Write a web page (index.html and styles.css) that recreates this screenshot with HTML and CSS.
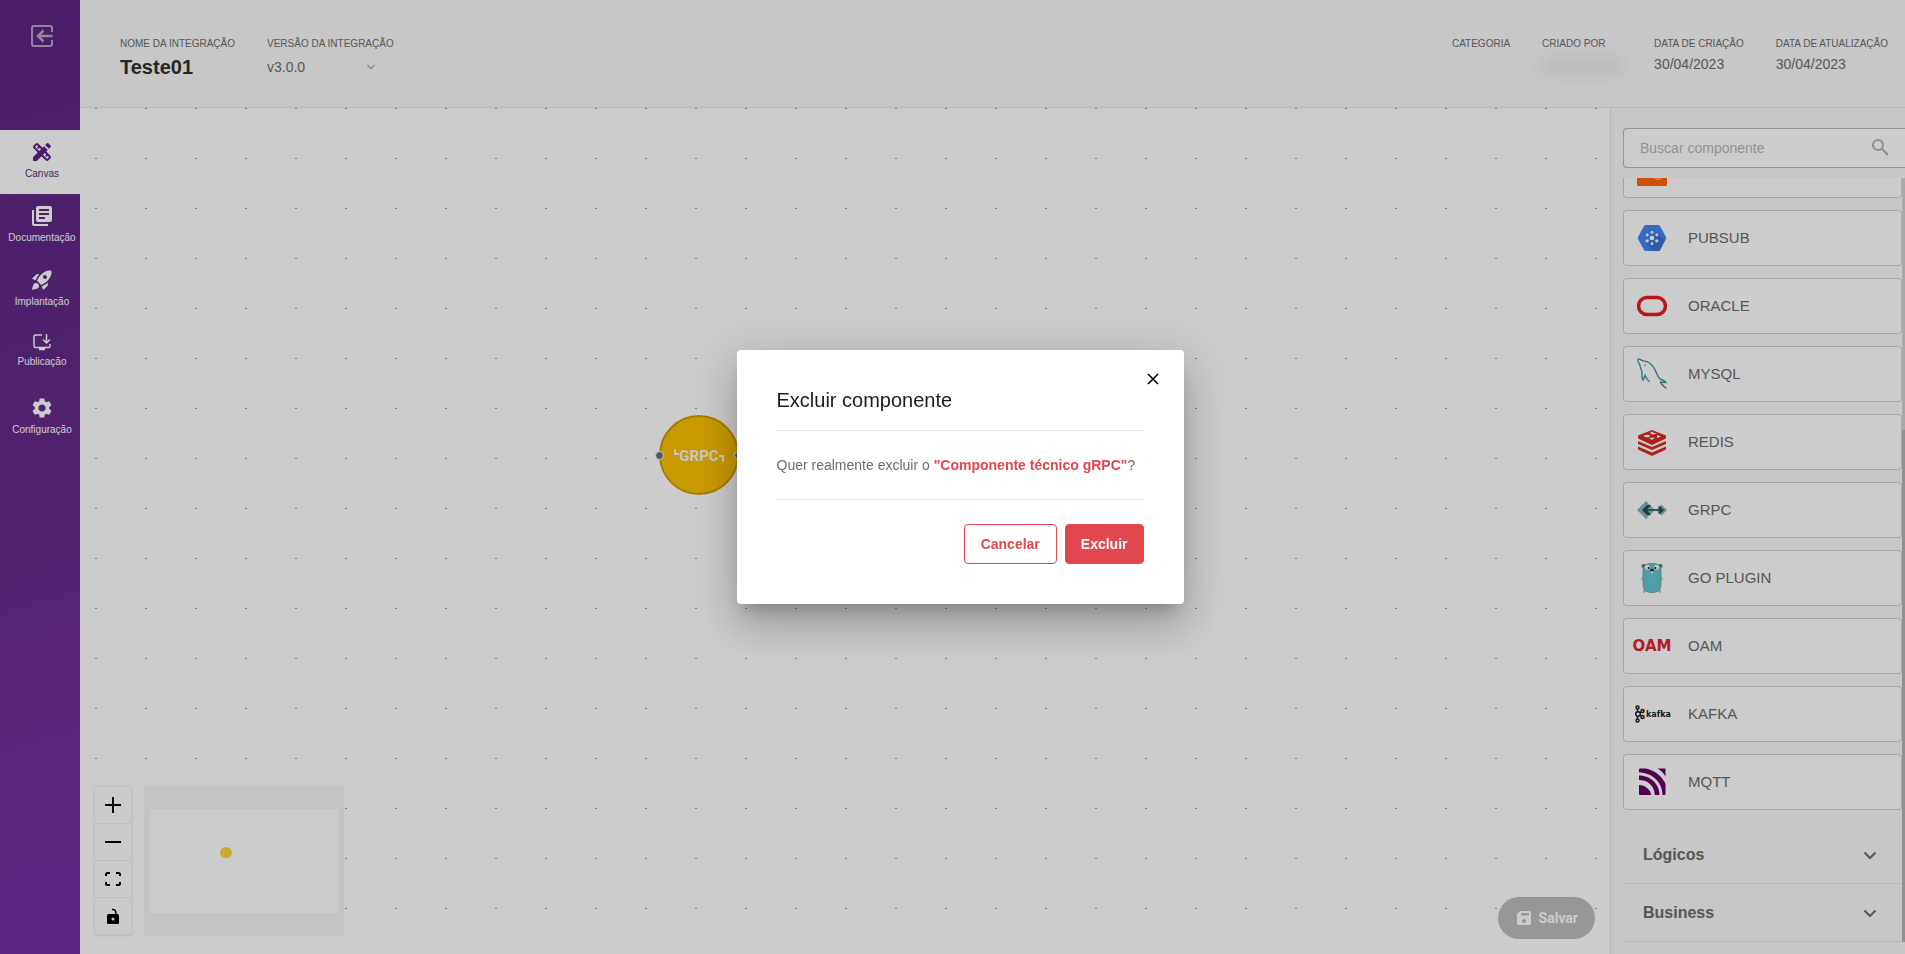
FILE: index.html
```html
<!DOCTYPE html>
<html lang="pt-BR">
<head>
    <meta charset="UTF-8">
    <meta name="viewport" content="width=device-width, initial-scale=1.0">
    <title>Teste01 - Canvas</title>
    <link rel="stylesheet" href="styles.css">
</head>
<body>
    <div class="app">
        <nav class="sidebar">
            <a href="#" class="exit" aria-label="Sair">
                <svg width="24" height="24" viewBox="0 0 24 24" fill="none" stroke="currentColor" stroke-width="2"><path d="M22 8V4a2 2 0 0 0-2-2H4a2 2 0 0 0-2 2v16a2 2 0 0 0 2 2h16a2 2 0 0 0 2-2v-4"/><path d="M22.500 12H9M13.500 6.500L8 12l5.500 5.500" stroke-width="2.500"/></svg>
            </a>
            <a href="#" class="nav-item active">
                <svg width="24" height="24" viewBox="0 0 24 24" fill="currentColor"><path d="M16.24 11.51l1.57-1.57-3.75-3.75-1.57 1.57-4.14-4.13c-.78-.78-2.05-.78-2.83 0l-1.9 1.9c-.78.78-.78 2.05 0 2.83l4.13 4.13L3 17.25V21h3.75l4.76-4.76 4.13 4.13c.95.95 2.23.6 2.83 0l1.9-1.9c.78-.78.78-2.05 0-2.83l-4.13-4.13zm-7.06-.44L5.04 6.94l1.89-1.9L8.2 6.31 7.02 7.5l1.41 1.41 1.19-1.19 1.45 1.45-1.89 1.9zm7.88 7.89l-4.13-4.13 1.9-1.9 1.45 1.45-1.19 1.19 1.41 1.41 1.19-1.19 1.27 1.27-1.9 1.9zM20.71 7.04c.39-.39.39-1.02 0-1.41l-2.34-2.34c-.47-.47-1.12-.29-1.41 0l-1.83 1.83 3.75 3.75 1.83-1.83z"/></svg>
                <span>Canvas</span>
            </a>
            <a href="#" class="nav-item">
                <svg width="24" height="24" viewBox="0 0 24 24" fill="currentColor"><path d="M4 6H2v14c0 1.1.9 2 2 2h14v-2H4V6zm16-4H8c-1.1 0-2 .9-2 2v12c0 1.1.9 2 2 2h12c1.1 0 2-.9 2-2V4c0-1.100-.9-2-2-2zm-1 9H9V9h10v2zm-4 4H9v-2h6v2zm4-8H9V5h10v2z"/></svg>
                <span>Documentação</span>
            </a>
            <a href="#" class="nav-item">
                <svg width="24" height="24" viewBox="0 0 24 24" fill="currentColor"><path d="M9.19 6.35c-2.04 2.29-3.44 5.58-3.57 5.89L2 10.690l4.050-4.050c.47-.47 1.150-.68 1.810-.55l1.330.26zM11.170 17s3.740-1.550 5.890-3.700c5.400-5.400 4.500-9.620 4.210-10.570-.95-.3-5.170-1.190-10.570 4.210C8.550 9.090 7 12.830 7 12.830L11.170 17zm6.480-2.190c-2.290 2.040-5.580 3.440-5.890 3.570L13.310 22l4.050-4.050c.47-.47.68-1.150.55-1.810l-.26-1.330zM9 18c0 .83-.34 1.580-.88 2.120C6.940 21.300 2 22 2 22s.7-4.940 1.880-6.120A2.996 2.996 0 0 1 9 18zm4-9c0-1.100.9-2 2-2s2 .9 2 2-.9 2-2 2-2-.9-2-2z"/></svg>
                <span>Implantação</span>
            </a>
            <a href="#" class="nav-item small-icon">
                <svg width="22" height="22" viewBox="0 0 22 22" fill="none" stroke="currentColor" stroke-width="1.500"><path d="M11 3H4.500Q3 3 3 4.500V14q0 1.500 1.500 1.500h13q1.500 0 1.500-1.500v-2M15.500 2v8.500M12 7.500l3.500 3.500L19 7.500"/><path d="M8 17h6" stroke-width="2.500"/></svg>
                <span>Publicação</span>
            </a>
            <a href="#" class="nav-item">
                <svg width="24" height="24" viewBox="0 0 24 24" fill="currentColor"><path d="M19.140 12.940c.04-.3.06-.61.06-.94 0-.32-.02-.64-.07-.94l2.030-1.580c.18-.14.23-.41.12-.61l-1.920-3.320c-.12-.22-.37-.29-.59-.22l-2.390.96c-.5-.38-1.030-.7-1.620-.94l-.36-2.540c-.04-.24-.24-.41-.48-.41h-3.840c-.24 0-.43.17-.47.41l-.36 2.540c-.59.24-1.130.57-1.620.94l-2.390-.96c-.22-.08-.47 0-.59.22L2.740 8.870c-.12.21-.08.47.12.61l2.030 1.580c-.05.3-.09.63-.09.94s.02.64.07.94l-2.030 1.580c-.18.14-.23.41-.12.61l1.920 3.320c.12.22.37.29.59.22l2.390-.96c.5.38 1.030.7 1.620.94l.36 2.540c.05.24.24.41.48.41h3.840c.24 0 .44-.17.47-.41l.36-2.540c.59-.24 1.130-.56 1.620-.94l2.390.96c.22.08.47 0 .59-.22l1.920-3.320c.12-.22.07-.47-.12-.61l-2.010-1.580zM12 15.600c-1.980 0-3.600-1.620-3.600-3.600s1.620-3.600 3.600-3.600 3.600 1.620 3.600 3.600-1.620 3.600-3.600 3.600z"/></svg>
                <span>Configuração</span>
            </a>
        </nav>

        <div class="main">
            <header class="header">
                <div class="field">
                    <span class="label">NOME DA INTEGRAÇÃO</span>
                    <h1>Teste01</h1>
                </div>
                <div class="field">
                    <label class="label" for="version">VERSÃO DA INTEGRAÇÃO</label>
                    <div class="version">
                        <select id="version">
                            <option>v3.0.0</option>
                        </select>
                        <svg width="10" height="10" viewBox="0 0 10 10" fill="none" stroke="currentColor" stroke-width="1.500"><path d="M1.500 3l3.500 3.500L8.500 3"/></svg>
                    </div>
                </div>
                <div class="field first-info">
                    <span class="label">CATEGORIA</span>
                </div>
                <div class="field author">
                    <span class="label">CRIADO POR</span>
                    <span class="author-name"></span>
                </div>
                <div class="field">
                    <span class="label">DATA DE CRIAÇÃO</span>
                    <span class="value">30/04/2023</span>
                </div>
                <div class="field">
                    <span class="label">DATA DE ATUALIZAÇÃO</span>
                    <span class="value">30/04/2023</span>
                </div>
            </header>

            <div class="workspace">
                <main class="canvas">
                    <div class="node">
                        <span class="handle left"></span>
                        <svg width="52" height="24" viewBox="0 0 52 24" fill="none" stroke="#f9f9f9" stroke-width="2"><path d="M2 6v5h4M46 13h4v6"/><text class="node-text" x="26" y="18" text-anchor="middle">GRPC</text></svg>
                        <span class="handle right"></span>
                    </div>

                    <div class="controls">
                        <button type="button" aria-label="Aumentar zoom"><svg width="16" height="16" viewBox="0 0 16 16" fill="none" stroke="currentColor" stroke-width="2"><path d="M8 0v16M0 8h16"/></svg></button>
                        <button type="button" aria-label="Diminuir zoom"><svg width="16" height="16" viewBox="0 0 16 16" fill="none" stroke="currentColor" stroke-width="2"><path d="M0 8h16"/></svg></button>
                        <button type="button" aria-label="Ajustar à tela"><svg width="16" height="16" viewBox="0 0 16 16" fill="none" stroke="currentColor" stroke-width="2"><path d="M1 5V3.500Q1 2 2.500 2H5M11 2h2.500Q15 2 15 3.500V5M15 11v1.500q0 1.500-1.500 1.500H11M5 14H2.500Q1 14 1 12.500V11"/></svg></button>
                        <button type="button" aria-label="Bloquear"><svg width="16" height="16" viewBox="0 0 16 16"><path d="M7 1.500q4-.5 4 4V7" fill="none" stroke="currentColor" stroke-width="1.500"/><rect x="2" y="6" width="12" height="10" rx="1.500" fill="currentColor"/><circle cx="8" cy="11" r="1.500" fill="#fefefe"/></svg></button>
                    </div>

                    <div class="minimap">
                        <div class="minimap-view"><span class="minimap-node"></span></div>
                    </div>

                    <button type="button" class="save">
                        <svg width="18" height="18" viewBox="0 0 18 18" fill="currentColor"><path fill-rule="evenodd" d="M5 2h9.500A1.500 1.500 0 0 1 16 3.500v11a1.500 1.500 0 0 1-1.500 1.500h-11A1.500 1.500 0 0 1 2 14.500V5zM6 4v2.500h8V4zM9 10a2 2 0 1 0 0 4 2 2 0 0 0 0-4z"/></svg>
                        Salvar
                    </button>
                </main>

                <aside class="panel">
                    <div class="search">
                        <input type="text" placeholder="Buscar componente" aria-label="Buscar componente">
                        <svg width="18" height="18" viewBox="0 0 18 18" fill="none" stroke="currentColor" stroke-width="2"><circle cx="7" cy="6" r="5"/><path d="M10.500 9.500L17 16"/></svg>
                    </div>

                    <div class="scroll-area">
                        <div class="list">
                            <div class="card">
                                <svg class="logo" width="40" height="32" viewBox="0 0 40 32"><rect x="5" width="30" height="32" rx="1" fill="#ff6600"/><path d="M23 24q3 3 6 0" fill="none" stroke="#ffb080" stroke-width="1.500"/></svg>
                                <span></span>
                            </div>
                            <div class="card">
                                <svg class="logo" width="40" height="32" viewBox="0 0 40 32"><path d="M13.500 3h13q1 0 1.500 1l6 11q.5 1 0 2l-6 11q-.5 1-1.500 1h-13q-1 0-1.500-1L6 17q-.5-1 0-2l6-11q.5-1 1.500-1z" fill="#4285f4"/><path d="M24 11l9 7-5.500 11H21l-6-7z" fill="#3b74d4"/><g fill="#fff"><circle cx="20" cy="16" r="2.300"/><circle cx="20" cy="10.300" r="1.400"/><circle cx="20" cy="21.700" r="1.400"/><circle cx="15.200" cy="13" r="1.400"/><circle cx="24.800" cy="13" r="1.400"/><circle cx="15.200" cy="18.800" r="1.600"/><circle cx="24.800" cy="18.800" r="1.600"/></g></svg>
                                <span>PUBSUB</span>
                            </div>
                            <div class="card">
                                <svg class="logo" width="40" height="32" viewBox="0 0 40 32"><rect x="6.500" y="7.500" width="27" height="17" rx="8.500" fill="none" stroke="#ea1b22" stroke-width="3.500"/></svg>
                                <span>ORACLE</span>
                            </div>
                            <div class="card">
                                <svg class="logo" width="40" height="32" viewBox="0 0 40 32" fill="none" stroke="#3a8c9e" stroke-width="1.300"><path d="M28 21C25 19 24.500 13.500 22 10 19 5.500 16 3.500 12.500 3.200 10 3 8.500 1 6.500 1.200c-1.500.5-.5 2.500.5 4 1.500 2.500 1 4.500 2.500 7 1.500 3-1 6 1.500 10 1.200-1 1-3 2-5 1 2.500 2 4.500 4.500 6.500M13 6.500v1.500M28 21c2 .5 4.500 1.500 6 3.500l-5.500-.5c.5 2.500 3 4 6 6.500"/></svg>
                                <span>MYSQL</span>
                            </div>
                            <div class="card">
                                <svg class="logo" width="40" height="32" viewBox="0 0 40 32"><path d="M20 4l14 5.500v3L20 19 6 12.500v-3z" fill="#d82c20"/><path d="M6 15l14 6 14-6v3l-14 6-14-6zM6 20.500l14 6 14-6v3L20 30 6 23.500z" fill="#d82c20"/><g fill="#fff"><ellipse cx="15" cy="10" rx="3" ry="1.300"/><path d="M18 7l2-1.500L22 7h3l-3 1.500-3-.5zM20 14l-3-2 6-.5zM25 9l4 1.500-4 1.500z"/></g></svg>
                                <span>REDIS</span>
                            </div>
                            <div class="card">
                                <svg class="logo" width="40" height="32" viewBox="0 0 40 32"><path d="M5 16l9-9 9 9-9 9zM24 16l5.500-5.500L35 16l-5.500 5.500z" fill="#80b9b7"/><path d="M19 11h-4l-5 5 5 5h4l-4-5zM26 12.500h2.500l3.500 3.500-3.500 3.500H26l2-3.500z" fill="#2c4858"/><path d="M14 16h15" stroke="#2c4858" stroke-width="1.500"/></svg>
                                <span>GRPC</span>
                            </div>
                            <div class="card">
                                <svg class="logo" width="40" height="32" viewBox="0 0 40 32"><g fill="#5a7174"><circle cx="11.500" cy="4" r="2"/><circle cx="28.500" cy="4" r="2"/></g><path d="M11 16.500H9.500M29 16.500h1.500M13 28l-1.500 2.500M27 28l1.500 2.500" stroke="#c9aa80" stroke-width="2"/><path d="M20 1.500c7 0 9 2 9 7v13c0 6-2 9-9 9s-9-3-9-9v-13c0-5 2-7 9-7z" fill="#67c6d2" stroke="#55919a" stroke-width=".7"/><g fill="#fff" stroke="#55717a" stroke-width=".5"><circle cx="15.500" cy="5.500" r="3"/><circle cx="24.500" cy="5.500" r="3"/></g><circle cx="16.500" cy="6" r="1"/><circle cx="23.500" cy="6" r="1"/><ellipse cx="20" cy="8" rx="2" ry="1.200" fill="#26343a"/><path d="M19 9.500h2v2h-2z" fill="#fff0d0"/></svg>
                                <span>GO PLUGIN</span>
                            </div>
                            <div class="card">
                                <svg class="logo" width="40" height="32" viewBox="0 0 40 32"><text class="oam-text" x="20" y="21" text-anchor="middle">OAM</text></svg>
                                <span>OAM</span>
                            </div>
                            <div class="card">
                                <svg class="logo" width="40" height="32" viewBox="0 0 40 32"><g fill="none" stroke="#231f20" stroke-width="1.500"><circle cx="6" cy="16" r="2.300"/><circle cx="5.500" cy="9.500" r="1.500"/><circle cx="5.500" cy="22.500" r="1.500"/><circle cx="10.500" cy="13" r="1.500"/><circle cx="10.500" cy="19" r="1.500"/><path d="M5.500 11v2.500M5.500 18.500v2.500M8 15l1.500-1M8 17l1.500 1"/></g><text class="kafka-text" x="14" y="19">kafka</text></svg>
                                <span>KAFKA</span>
                            </div>
                            <div class="card">
                                <svg class="logo" width="40" height="32" viewBox="0 0 40 32"><path d="M7 19c6 0 12 5 12 10H8a1 1 0 0 1-1-1z" fill="#660066"/><path d="M7 9.500c12 0 20.500 9 20.500 19.500h-4.700C22.500 20 16 14 7 14zM8 2.500h6c9 2 16.500 8 19.500 15.500V28a1 1 0 0 1-1 1h-2C30.500 16 20 6.500 7 6.500v-3a1 1 0 0 1 1-1z" fill="#660066"/><path d="M25.500 2.500H33a.5.500 0 0 1 .5.500v7.500c-2-3.500-4.500-6-8-8z" fill="#660066"/></svg>
                                <span>MQTT</span>
                            </div>
                            <div class="groups">
                                <button type="button" class="group">Lógicos
                                    <svg width="14" height="14" viewBox="0 0 14 14" fill="none" stroke="currentColor" stroke-width="2"><path d="M1.500 4.500L7 10l5.500-5.500"/></svg>
                                </button>
                                <button type="button" class="group">Business
                                    <svg width="14" height="14" viewBox="0 0 14 14" fill="none" stroke="currentColor" stroke-width="2"><path d="M1.500 4.500L7 10l5.500-5.500"/></svg>
                                </button>
                            </div>
                        </div>
                        <div class="scrollbar"><div class="thumb"></div></div>
                    </div>
                </aside>
            </div>
        </div>
    </div>

    <div class="overlay">
        <div class="modal" role="dialog" aria-labelledby="modal-title">
            <button type="button" class="close" aria-label="Fechar">
                <svg width="12" height="12" viewBox="0 0 12 12" fill="none" stroke="currentColor" stroke-width="1.600"><path d="M1 1l10 10M11 1L1 11"/></svg>
            </button>
            <h2 id="modal-title">Excluir componente</h2>
            <p>Quer realmente excluir o <strong>"Componente técnico gRPC"</strong>?</p>
            <div class="actions">
                <button type="button" class="btn">Cancelar</button>
                <button type="button" class="btn btn-danger">Excluir</button>
            </div>
        </div>
    </div>
</body>
</html>
```

FILE: styles.css
```css
* {
    box-sizing: border-box;
}
body {
    font-family: "Liberation Sans", Arial, sans-serif;
    margin: 0;
    font-size: 14px;
    color: #6c6c6c;
    background-color: #fff;
}
button {
    font-family: inherit;
    border: none;
    padding: 0;
    cursor: pointer;
}
svg {
    display: block;
    flex: none;
}
.app {
    display: flex;
    height: 100vh;
    overflow: hidden;
}

/* menu lateral */
.sidebar {
    width: 80px;
    flex: none;
    background: linear-gradient(165deg, #5c2583 0%, #652c8b 50%, #7830a8 100%);
}
.exit {
    display: flex;
    height: 130px;
    padding: 24px 0 0 30px;
    color: #b9a6c6;
}
.nav-item {
    display: flex;
    flex-direction: column;
    align-items: center;
    gap: 2px;
    height: 64px;
    padding: 10px 0 0 4px;
    color: #fff;
    font-size: 10px;
    line-height: 16px;
    text-decoration: none;
}
.nav-item.small-icon {
    gap: 0;
}
.nav-item.active {
    background-color: #fff;
    color: #5c2583;
}

/* cabecalho */
.main {
    flex: 1;
    min-width: 0;
    display: flex;
    flex-direction: column;
}
.header {
    display: flex;
    gap: 32px;
    height: 108px;
    padding: 36px 17px 0 40px;
    background-color: #f9f9f9;
    border-bottom: 1px solid #e6e6e6;
}
.field {
    display: flex;
    flex-direction: column;
    gap: 4px;
}
.label {
    font-size: 10px;
    line-height: 16px;
    white-space: nowrap;
}
.header h1 {
    margin: 0;
    font-size: 20px;
    line-height: 22px;
    color: #303030;
}
.value {
    line-height: 16px;
}
.version {
    display: flex;
    align-items: center;
    width: 109px;
    height: 22px;
    color: #aaa;
}
.version select {
    flex: 1;
    appearance: none;
    border: none;
    padding: 0;
    background: none;
    font: inherit;
    color: #6c6c6c;
}
.first-info {
    margin-left: auto;
}
.author {
    width: 80px;
}
.author-name {
    height: 20px;
    background-color: #ebebeb;
    filter: blur(6px);
}

/* area de trabalho */
.workspace {
    flex: 1;
    min-height: 0;
    display: flex;
}
.canvas {
    position: relative;
    flex: 1;
    background-image: radial-gradient(circle at 16px 0, #9a9aa2 1px, transparent 1px);
    background-size: 50px 50px;
}
.node {
    position: absolute;
    left: 579px;
    top: 307px;
    display: flex;
    align-items: center;
    justify-content: center;
    width: 80px;
    height: 80px;
    border: 2px solid #d09c00;
    border-radius: 50%;
    background-color: #fcc000;
}
.node-text {
    font-family: Roboto, sans-serif;
    font-size: 15px;
    font-weight: bold;
    fill: #f9f9f9;
    stroke: none;
}
.handle {
    position: absolute;
    width: 9px;
    height: 9px;
    border: 1px solid #fff;
    border-radius: 50%;
    background-color: #6c6c6c;
}
.handle.left {
    left: -6px;
}
.handle.right {
    right: -6px;
}
.controls {
    position: absolute;
    left: 15px;
    bottom: 19px;
    box-shadow: 0 0 2px 1px rgba(0, 0, 0, 0.08);
}
.controls button {
    display: flex;
    align-items: center;
    justify-content: center;
    width: 36px;
    height: 37px;
    border-bottom: 1px solid #eee;
    background-color: #fefefe;
    color: #000;
}
.minimap {
    position: absolute;
    left: 64px;
    bottom: 18px;
    display: flex;
    width: 200px;
    height: 150px;
    padding: 23px 6px;
    background-color: #f5f5f5;
}
.minimap-view {
    flex: 1;
    padding: 38px 70px;
    background-color: #fff;
}
.minimap-node {
    display: block;
    width: 12px;
    height: 11px;
    border-radius: 50%;
    background-color: #ffd044;
}
.save {
    position: absolute;
    right: 15px;
    bottom: 15px;
    display: flex;
    align-items: center;
    gap: 6px;
    height: 42px;
    padding: 0 17px;
    border-radius: 21px;
    background-color: #bdbdbd;
    color: #fff;
    font-family: Roboto, sans-serif;
    font-size: 14px;
    font-weight: bold;
}

/* componentes */
.panel {
    display: flex;
    flex-direction: column;
    gap: 10px;
    width: 295px;
    padding: 20px 0 12px 12px;
    background-color: #f9f9f9;
    border-left: 1px solid #e6e6e6;
}
.search {
    display: flex;
    align-items: center;
    height: 40px;
    padding: 0 16px;
    border: 1px solid #b8b8b8;
    border-right: none;
    border-radius: 4px 0 0 4px;
    background-color: #fff;
    color: #b0b0b0;
}
.search input {
    flex: 1;
    min-width: 0;
    border: none;
    padding: 0;
    outline: none;
    background: none;
    font: inherit;
}
.search input::placeholder {
    color: #b5b5b5;
}
.scroll-area {
    flex: 1;
    min-height: 0;
    display: flex;
}
.list {
    flex: 1;
    display: flex;
    flex-direction: column;
    justify-content: flex-end;
    gap: 12px;
    overflow: hidden;
}
.card {
    display: flex;
    align-items: center;
    gap: 16px;
    flex: none;
    height: 56px;
    padding-left: 8px;
    border: 1px solid #c9d1de;
    border-radius: 4px;
    background-color: #fff;
    font-size: 15px;
    line-height: 20px;
}
.oam-text {
    font-family: "DejaVu Sans", sans-serif;
    font-size: 15px;
    font-weight: bold;
    fill: #dd2530;
}
.kafka-text {
    font-family: "DejaVu Sans", sans-serif;
    font-size: 8px;
    font-weight: bold;
    fill: #231f20;
}
.groups {
    padding-top: 4px;
}
.group {
    display: flex;
    align-items: center;
    justify-content: space-between;
    width: 100%;
    height: 58px;
    padding: 0 25px 0 20px;
    border-bottom: 1px solid #e6e6e6;
    background: none;
    color: #6c6c6c;
    font-size: 16px;
    font-weight: bold;
}
.scrollbar {
    display: flex;
    flex-direction: column;
    justify-content: flex-end;
    width: 3px;
    background-color: #d4d4d4;
}
.thumb {
    height: 67%;
    background-color: #b5b5b5;
}

/* modal */
.overlay {
    position: fixed;
    inset: 0;
    display: flex;
    align-items: center;
    justify-content: center;
    padding-left: 15px;
    background-color: rgba(0, 0, 0, 0.2);
}
.modal {
    position: relative;
    width: 447px;
    padding: 40px;
    border-radius: 4px;
    background-color: #fff;
    box-shadow: 0 11px 15px -7px rgba(0, 0, 0, 0.2), 0 24px 38px 3px rgba(0, 0, 0, 0.14), 0 9px 46px 8px rgba(0, 0, 0, 0.12);
}
.close {
    position: absolute;
    top: 23px;
    right: 25px;
    background: none;
    color: #000;
}
.modal h2 {
    margin: 0;
    padding-bottom: 20px;
    border-bottom: 1px solid #e6e6e6;
    color: #1c1c1c;
    font-size: 20px;
    font-weight: normal;
    line-height: 20px;
}
.modal p {
    margin: 0 0 24px;
    padding: 24px 0;
    border-bottom: 1px solid #e6e6e6;
    line-height: 20px;
}
.modal strong {
    color: #e2474f;
}
.actions {
    display: flex;
    justify-content: flex-end;
    gap: 8px;
}
.btn {
    height: 40px;
    padding: 0 16px;
    border: 1px solid #e2474f;
    border-radius: 4px;
    background-color: #fff;
    color: #e2474f;
    font-size: 14px;
    font-weight: bold;
}
.btn-danger {
    padding: 0 15px;
    background-color: #e2474f;
    color: #fff;
}
```
